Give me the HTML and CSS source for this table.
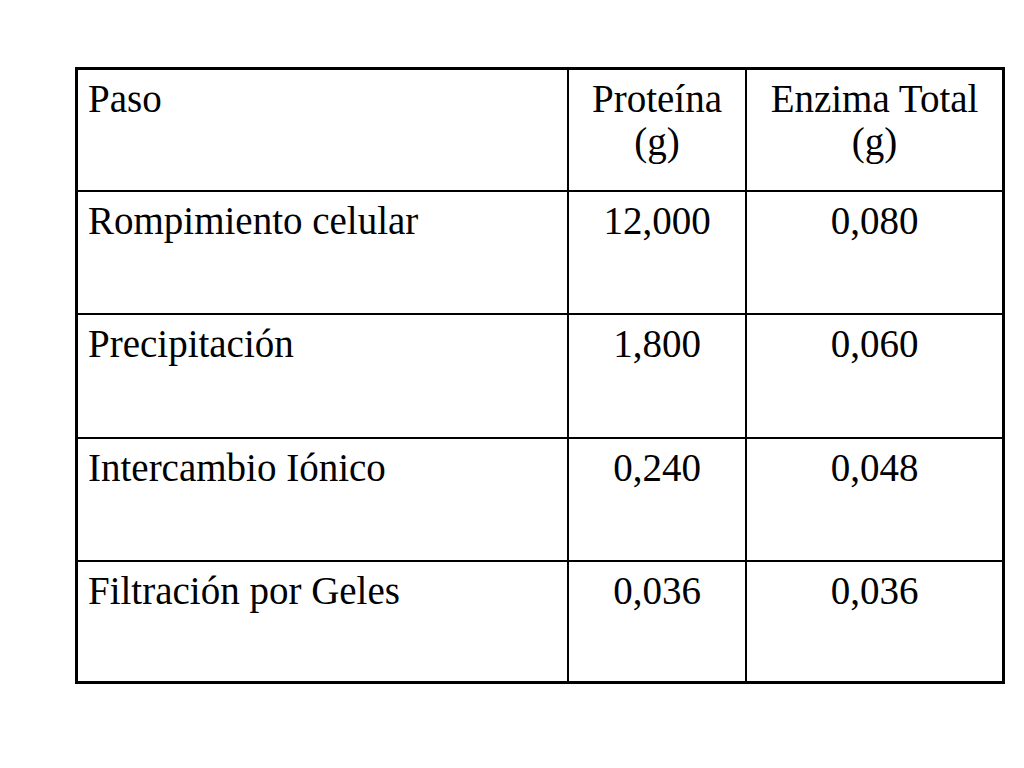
FILE: index.html
```html
<!DOCTYPE html>
<html lang="es">
<head>
<meta charset="utf-8">
<title>Tabla de purificación</title>
<link rel="stylesheet" href="styles.css">
</head>
<body>
<div class="table">
  <div class="cell left">Paso</div>
  <div class="cell center">Proteína<br>(g)</div>
  <div class="cell center">Enzima Total<br>(g)</div>

  <div class="cell left">Rompimiento celular</div>
  <div class="cell center">12,000</div>
  <div class="cell center">0,080</div>

  <div class="cell left">Precipitación</div>
  <div class="cell center">1,800</div>
  <div class="cell center">0,060</div>

  <div class="cell left">Intercambio Iónico</div>
  <div class="cell center">0,240</div>
  <div class="cell center">0,048</div>

  <div class="cell left">Filtración por Geles</div>
  <div class="cell center">0,036</div>
  <div class="cell center">0,036</div>
</div>
</body>
</html>
```
FILE: styles.css
```css
html, body {
  margin: 0;
  padding: 0;
  background: #ffffff;
}
body {
  width: 1024px;
  height: 768px;
  overflow: hidden;
  font-family: "Liberation Serif", "Times New Roman", serif;
  color: #000000;
}
.table {
  margin: 67px 0 0 75px;
  width: 924px;
  border: 3px solid #000000;
  background: #000000;
  display: grid;
  grid-template-columns: 489px 176px 255px;
  grid-template-rows: 120px 121px 122px 121px 119px;
  column-gap: 2px;
  row-gap: 2px;
}
.cell {
  background: #ffffff;
  font-size: 39px;
  line-height: 43px;
  padding-top: 7px;
  box-sizing: border-box;
}
.left {
  padding-left: 10px;
  text-align: left;
}
.center {
  text-align: center;
}
```
